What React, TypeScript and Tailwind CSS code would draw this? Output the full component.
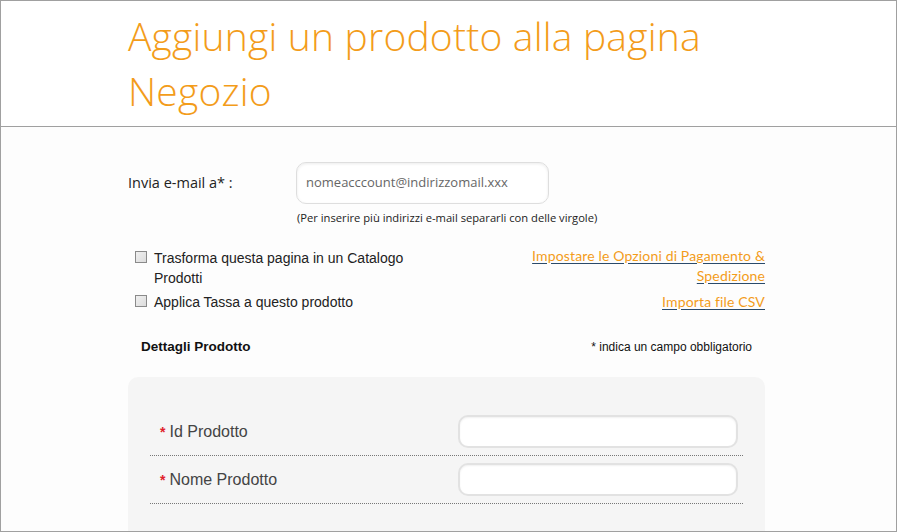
import React from "react";

export default function App() {
  return (
    <div className="w-[897px] h-[532px] overflow-hidden border border-[#a0a0a0] bg-[#fdfdfd] flex flex-col" style={{ fontFamily: "'Liberation Sans', Arial, sans-serif" }}>
      <div className="h-[126px] shrink-0 bg-white border-b border-[#a0a0a0] pl-[127px] pt-[7px]">
        <h1 className="text-[39px] leading-[55px] text-[#f39c1a] font-light tracking-[0.2px]" style={{ fontFamily: "'Open Sans', sans-serif" }}>
          Aggiungi un prodotto alla pagina
          <br />
          Negozio
        </h1>
      </div>
      <div className="pl-[127px] w-[764px] pt-[35px]">
        <div className="flex items-start">
          <div className="w-[168px] pt-[10px] text-[14.5px] text-[#222]" style={{ fontFamily: "'Open Sans', sans-serif" }}>Invia e-mail a* :</div>
          <div>
            <div className="w-[253px] h-[42px] rounded-[10px] border border-[#dedede] bg-white shadow-[inset_0_1px_3px_rgba(0,0,0,0.08)] flex items-center pl-[9px] text-[13px] text-[#666]" style={{ fontFamily: "'Open Sans', sans-serif" }}>
              nomeacccount@indirizzomail.xxx
            </div>
            <div className="mt-[6px] pl-[1px] text-[11.2px] text-[#222]" style={{ fontFamily: "'Open Sans', sans-serif" }}>
              (Per inserire più indirizzi e-mail separarli con delle virgole)
            </div>
          </div>
        </div>

        <div className="mt-[21px] pl-[7px] flex justify-between text-[14px] text-[#222] leading-[20px]">
          <div>
            <div className="flex items-start">
              <span className="mt-[3px] w-[12px] h-[12px] border border-[#8a8a8a] bg-gradient-to-br from-[#f0f0f0] to-[#dcdcdc] shrink-0" />
              <span className="ml-[7px] w-[262px]">Trasforma questa pagina in un Catalogo Prodotti</span>
            </div>
            <div className="flex items-start mt-[4px]">
              <span className="mt-[3px] w-[12px] h-[12px] border border-[#8a8a8a] bg-gradient-to-br from-[#f0f0f0] to-[#dcdcdc] shrink-0" />
              <span className="ml-[7px]">Applica Tassa a questo prodotto</span>
            </div>
          </div>
          <div className="text-right text-[14px] text-[#f39c1a] leading-[20px] -mt-[2px]" style={{ fontFamily: "Lato, sans-serif" }}>
            <div className="underline decoration-[#2a4a6a] underline-offset-[2px] tracking-[0.15px]">Impostare le Opzioni di Pagamento &amp;</div>
            <div className="underline decoration-[#2a4a6a] underline-offset-[2px] tracking-[0.15px]">Spedizione</div>
            <div className="mt-[6px] underline decoration-[#2a4a6a] underline-offset-[2px] tracking-[0.15px]">Importa file CSV</div>
          </div>
        </div>

        <div className="mt-[25px] flex justify-between items-center pl-[13px] pr-[13px]">
          <span className="text-[13.5px] font-bold text-[#111]">Dettagli Prodotto</span>
          <span className="text-[12px] text-[#111]">* indica un campo obbligatorio</span>
        </div>

        <div className="mt-[20px] rounded-t-[10px] bg-[#f5f5f5] px-[22px] pt-[31px] pb-[40px]">
          {["Id Prodotto", "Nome Prodotto"].map((l) => (
            <div key={l} className="flex items-center justify-between border-b border-dotted border-[#777] h-[48px] pl-[10px] pr-[5px]">
              <span className="text-[16px] text-[#444]">
                <span className="text-[#e0202a] text-[14px] font-bold mr-[4px]">*</span>
                {l}
              </span>
              <div className="w-[280px] h-[33px] rounded-[10px] border-2 border-[#e2e2e2] bg-white shadow-[inset_0_1px_2px_rgba(0,0,0,0.06)] mb-[1px]" />
            </div>
          ))}
        </div>
      </div>
    </div>
  );
}
